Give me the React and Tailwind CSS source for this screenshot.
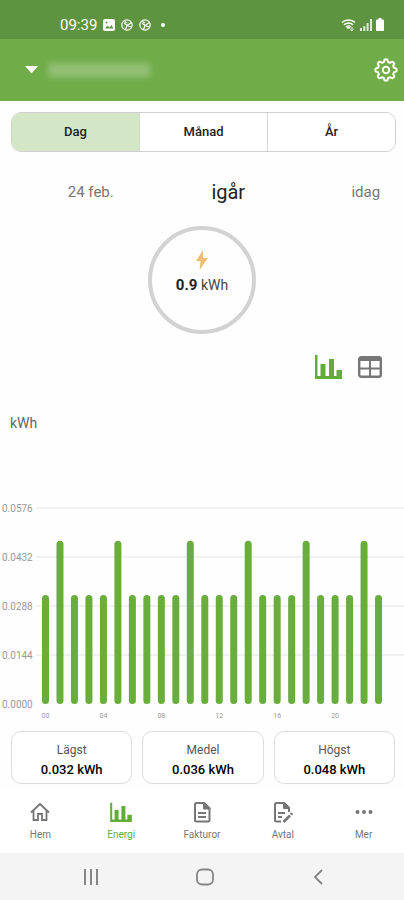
import React, { useState } from 'react';

const periods = ['Dag', 'Månad', 'År'];

const dates = ['24 feb.', 'igår', 'idag'];

const usage = [
  0.032, 0.048, 0.032, 0.032, 0.032, 0.048, 0.032, 0.032,
  0.032, 0.032, 0.048, 0.032, 0.032, 0.032, 0.048, 0.032,
  0.032, 0.032, 0.048, 0.032, 0.032, 0.032, 0.048, 0.032,
];

const ticks = [0.0576, 0.0432, 0.0288, 0.0144, 0];

const summary = [
  { label: 'Lägst', value: '0.032 kWh' },
  { label: 'Medel', value: '0.036 kWh' },
  { label: 'Högst', value: '0.048 kWh' },
];

// Outline of a cog with eight rounded teeth
const gearPoints = Array.from({ length: 96 }, (_, i) => {
  const angle = (i / 96) * Math.PI * 2;
  const radius = 9.4 + 1.3 * Math.tanh(2 * Math.cos(8 * angle));
  return `${(12 + radius * Math.cos(angle)).toFixed(2)},${(12 + radius * Math.sin(angle)).toFixed(2)}`;
}).join(' ');

function GearIcon() {
  return (
    <svg viewBox="0 0 24 24" className="size-6" fill="none" stroke="currentColor" strokeWidth="2" strokeLinejoin="round" aria-hidden="true">
      <polygon points={gearPoints} />
      <circle cx="12" cy="12" r="3.2" />
    </svg>
  );
}

function BarsIcon({ className }) {
  return (
    <svg viewBox="0 0 27 25" className={className} fill="currentColor" aria-hidden="true">
      <path d="M0 1h2.5v21H27v3H0z" />
      <path d="M5.500 10h5v13h-5zM14 5h5v18h-5zM21.500 16H27v7h-5.500z" />
    </svg>
  );
}

function TableIcon() {
  return (
    <svg viewBox="0 0 24 22" className="h-[22px] w-6" fill="none" stroke="currentColor" strokeWidth="2.4" aria-hidden="true">
      <rect x="1.2" y="1.2" width="21.6" height="19.6" rx="2" />
      <path d="M1 3h22" strokeWidth="4" />
      <path d="M1 12.5h22M12 4v17" strokeWidth="2" />
    </svg>
  );
}

function HomeIcon() {
  return (
    <svg viewBox="0 0 20 20" className="size-5" fill="none" stroke="currentColor" strokeWidth="1.8" aria-hidden="true">
      <path d="M1 10.5 10 2l9 8.5M3.5 8.5V18H8v-6h4v6h4.500V8.5" />
    </svg>
  );
}

function InvoiceIcon() {
  return (
    <svg viewBox="0 0 20 22" className="h-[22px] w-5" fill="none" stroke="currentColor" strokeWidth="2" strokeLinejoin="round" aria-hidden="true">
      <path d="M4.500 2H12l5.500 5.500V19a1.500 1.500 0 0 1-1.500 1.500H4.500A1.500 1.500 0 0 1 3 19V3.500A1.500 1.500 0 0 1 4.500 2z" />
      <path d="M12 2v5.500h5.500z" fill="currentColor" />
      <path d="M6 12h8M6 16h8" />
    </svg>
  );
}

function ContractIcon() {
  return (
    <svg viewBox="0 0 20 22" className="h-[22px] w-5" fill="none" stroke="currentColor" strokeWidth="2" strokeLinejoin="round" aria-hidden="true">
      <path d="M8 20.500H3.500A1.500 1.500 0 0 1 2 19V3.500A1.500 1.500 0 0 1 3.500 2H11l5 5v4" />
      <path d="M11 2v5h5z" fill="currentColor" />
      <path d="M5 12h7M5 16h4" />
      <path d="m10.500 21 6.500-6.500M17.800 13.700l1.500-1.500" strokeWidth="2.600" />
    </svg>
  );
}

function MoreIcon() {
  return (
    <svg viewBox="0 0 20 20" className="size-5" fill="currentColor" aria-hidden="true">
      <circle cx="3.5" cy="10" r="2" />
      <circle cx="10" cy="10" r="2" />
      <circle cx="16.5" cy="10" r="2" />
    </svg>
  );
}

const tabs = [
  { label: 'Hem', icon: <HomeIcon /> },
  { label: 'Energi', icon: <BarsIcon className="h-5 w-[22px]" />, active: true },
  { label: 'Fakturor', icon: <InvoiceIcon /> },
  { label: 'Avtal', icon: <ContractIcon /> },
  { label: 'Mer', icon: <MoreIcon /> },
];

function ShutterIcon() {
  return (
    <svg viewBox="0 0 12 12" className="size-3" fill="none" stroke="currentColor" strokeWidth="1.2" aria-hidden="true">
      <circle cx="6" cy="6" r="5.2" />
      <path d="m3 4 3 2.500 4.500-3M6 6.500l-1.500 4M6 6.500 10 8M3.500 2.500 6 4" />
    </svg>
  );
}

function StatusBar() {
  return (
    <div className="flex h-[39px] items-end justify-between bg-[#5e943f] pr-5 pb-[5px] pl-[60px] text-white">
      <div className="flex items-center gap-[6px]">
        <span className="text-[15px] leading-[18px]">09:39</span>
        <svg viewBox="0 0 12 12" className="size-3" aria-hidden="true">
          <rect width="12" height="12" rx="2" fill="currentColor" />
          <path d="m2 9.500 2.500-3 2 2L8.500 6l2 3.500z" fill="#5e943f" />
          <circle cx="3.5" cy="3.5" r="1" fill="#5e943f" />
        </svg>
        <ShutterIcon />
        <ShutterIcon />
        <span className="ml-1 size-1 rounded-full bg-white" />
      </div>
      <div className="flex items-center gap-1 pb-[3px]">
        <svg viewBox="0 0 15 13" className="h-[13px] w-[15px]" fill="none" stroke="currentColor" strokeWidth="1.5" aria-hidden="true">
          <path d="M1 4.500C4.500 1 10.500 1 14 4.500M3 6.800c2.500-2.500 6.500-2.500 9 0M5 9c1.500-1.500 3.500-1.500 5 0" />
          <path d="M6 9.500h3L7.500 11zM11 9v4M9.500 11.500 11 13l1.500-1.500" strokeWidth="1" />
        </svg>
        <svg viewBox="0 0 12 12" className="size-3" fill="currentColor" aria-hidden="true">
          <path d="M0 9h2v3H0zM3.300 7h2v5h-2zM6.600 4h2v8h-2zM10 0h2v12h-2z" opacity="0.8" />
        </svg>
        <svg viewBox="0 0 8 13" className="h-[13px] w-2" fill="currentColor" aria-hidden="true">
          <path d="M2.500 0h3v1.500H7a1 1 0 0 1 1 1V12a1 1 0 0 1-1 1H1a1 1 0 0 1-1-1V2.500a1 1 0 0 1 1-1h1.500z" />
        </svg>
      </div>
    </div>
  );
}

function UsageChart() {
  const baseline = 204;
  const height = 196;
  const max = ticks[0];
  const toY = (value) => baseline - (value / max) * height;
  const toX = (hour) => 45.5 + hour * 14.48;

  return (
    <svg viewBox="0 0 404 224" className="block w-full" role="img" aria-label="kWh">
      {ticks.map((tick) => (
        <g key={tick}>
          {tick > 0 && <line x1="36" x2="404" y1={toY(tick)} y2={toY(tick)} stroke="#ececec" strokeWidth="1.5" />}
          <text x="2" y={toY(tick) + 4} fontSize="10" fill="#9a9a9a">{tick.toFixed(4)}</text>
        </g>
      ))}
      {usage.map((value, hour) => (
        <rect
          key={hour}
          x={toX(hour) - 3.5}
          y={toY(value)}
          width="7"
          height={baseline - toY(value)}
          rx="3.5"
          fill="#69ad3d"
        />
      ))}
      {usage.map((_, hour) => hour % 4 === 0 && (
        <text key={hour} x={toX(hour)} y="218" fontSize="7" fill="#9a9a9a" textAnchor="middle">
          {String(hour).padStart(2, '0')}
        </text>
      ))}
    </svg>
  );
}

function App() {
  const [period, setPeriod] = useState('Dag');

  return (
    <div className="min-h-screen bg-[#fefefe] font-[Roboto,sans-serif] text-[#222]">
      <StatusBar />

      {/* Header */}
      <header className="flex h-[62px] items-center justify-between bg-[#70ac48] pr-[6px] pl-[25px] text-white">
        <button type="button" aria-label="Välj adress" className="flex items-center gap-[10px]">
          <svg viewBox="0 0 13 8" className="h-2 w-[13px]" fill="currentColor" aria-hidden="true">
            <path d="M0 0h13L6.500 7.500z" />
          </svg>
          <span className="h-[14px] w-[102px] bg-white/25 blur-[3px]" />
        </button>
        <button type="button" aria-label="Inställningar">
          <GearIcon />
        </button>
      </header>

      <main>
        {/* Period */}
        <div className="mt-[11px] mr-2 ml-[11px] flex h-10 divide-x divide-[#d4d4d4] overflow-hidden rounded-[10px] border border-[#d0d0d0]">
          {periods.map((item) => (
            <button
              key={item}
              type="button"
              onClick={() => setPeriod(item)}
              className={`flex-1 text-[13px] font-medium ${period === item ? 'bg-[#d3e7c6]' : 'bg-white'}`}
            >
              {item}
            </button>
          ))}
        </div>

        {/* Dates */}
        <div className="mt-[26px] flex h-7 items-center overflow-hidden pl-[22px]">
          {dates.map((date) => (
            <button
              key={date}
              type="button"
              className={`w-[36%] shrink-0 ${date === 'igår' ? 'text-xl text-[#222]' : 'text-[15px] text-[#777]'}`}
            >
              {date}
            </button>
          ))}
        </div>

        {/* Total */}
        <div className="mx-auto mt-5 flex size-[108px] flex-col items-center rounded-full border-4 border-[#d2d2d2] pt-5">
          <svg viewBox="0 0 12 20" className="h-5 w-3" fill="#efbd74" aria-hidden="true">
            <path d="M7 0 0 11h4.500L3.500 20 12 8H7z" />
          </svg>
          <p className="mt-[5px] text-sm leading-5 text-[#444]">
            <span className="text-[15px] font-bold text-[#222]">0.9</span> kWh
          </p>
        </div>

        <div className="mt-5 flex items-center justify-end gap-4 pr-[22px]">
          <button type="button" aria-label="Diagram" className="text-[#62ad37]">
            <BarsIcon className="h-[25px] w-[27px]" />
          </button>
          <button type="button" aria-label="Tabell" className="text-[#777]">
            <TableIcon />
          </button>
        </div>

        <p className="mt-[34px] ml-[10px] text-sm leading-5 text-[#666]">kWh</p>
        <div className="mt-[67px]">
          <UsageChart />
        </div>

        {/* Summary */}
        <div className="mt-[7px] grid grid-cols-3 gap-[10px] pr-[9px] pl-[11px]">
          {summary.map((item) => (
            <div key={item.label} className="h-[53px] rounded-[10px] border border-[#dcdcdc] bg-white pt-2 text-center">
              <p className="text-xs leading-5 text-[#555]">{item.label}</p>
              <p className="text-[13px] leading-5 font-medium text-black">{item.value}</p>
            </div>
          ))}
        </div>
      </main>

      {/* Tab bar */}
      <nav className="mt-[6px] grid h-[63px] grid-cols-5 bg-white pt-[10px]">
        {tabs.map((tab) => (
          <a
            key={tab.label}
            href="#"
            aria-current={tab.active ? 'page' : undefined}
            className={`flex flex-col items-center text-[10px] ${tab.active ? 'text-[#62ad37]' : 'text-[#777]'}`}
          >
            <span className="flex h-6 items-center">{tab.icon}</span>
            <span className="mt-[3px] leading-4">{tab.label}</span>
          </a>
        ))}
      </nav>

      {/* System buttons */}
      <div className="flex h-[47px] items-center justify-between bg-[#f4f4f4] pr-[77px] pl-[82px] text-[#858585]">
        <button type="button" aria-label="Senaste" className="flex w-[18px] justify-center">
          <svg viewBox="0 0 18 16" className="h-4 w-[18px]" stroke="currentColor" strokeWidth="2" aria-hidden="true">
            <path d="M3 0v16M9 0v16M15 0v16" />
          </svg>
        </button>
        <button type="button" aria-label="Start" className="flex w-[18px] justify-center">
          <svg viewBox="0 0 18 18" className="size-[18px]" fill="none" stroke="currentColor" strokeWidth="1.8" aria-hidden="true">
            <rect x="1" y="1.5" width="16" height="15" rx="5" />
          </svg>
        </button>
        <button type="button" aria-label="Tillbaka" className="flex w-[18px] justify-center">
          <svg viewBox="0 0 9 16" className="h-4 w-[9px]" fill="none" stroke="currentColor" strokeWidth="1.8" aria-hidden="true">
            <path d="M8 1 1 8l7 7" />
          </svg>
        </button>
      </div>
    </div>
  );
}

export default App;
